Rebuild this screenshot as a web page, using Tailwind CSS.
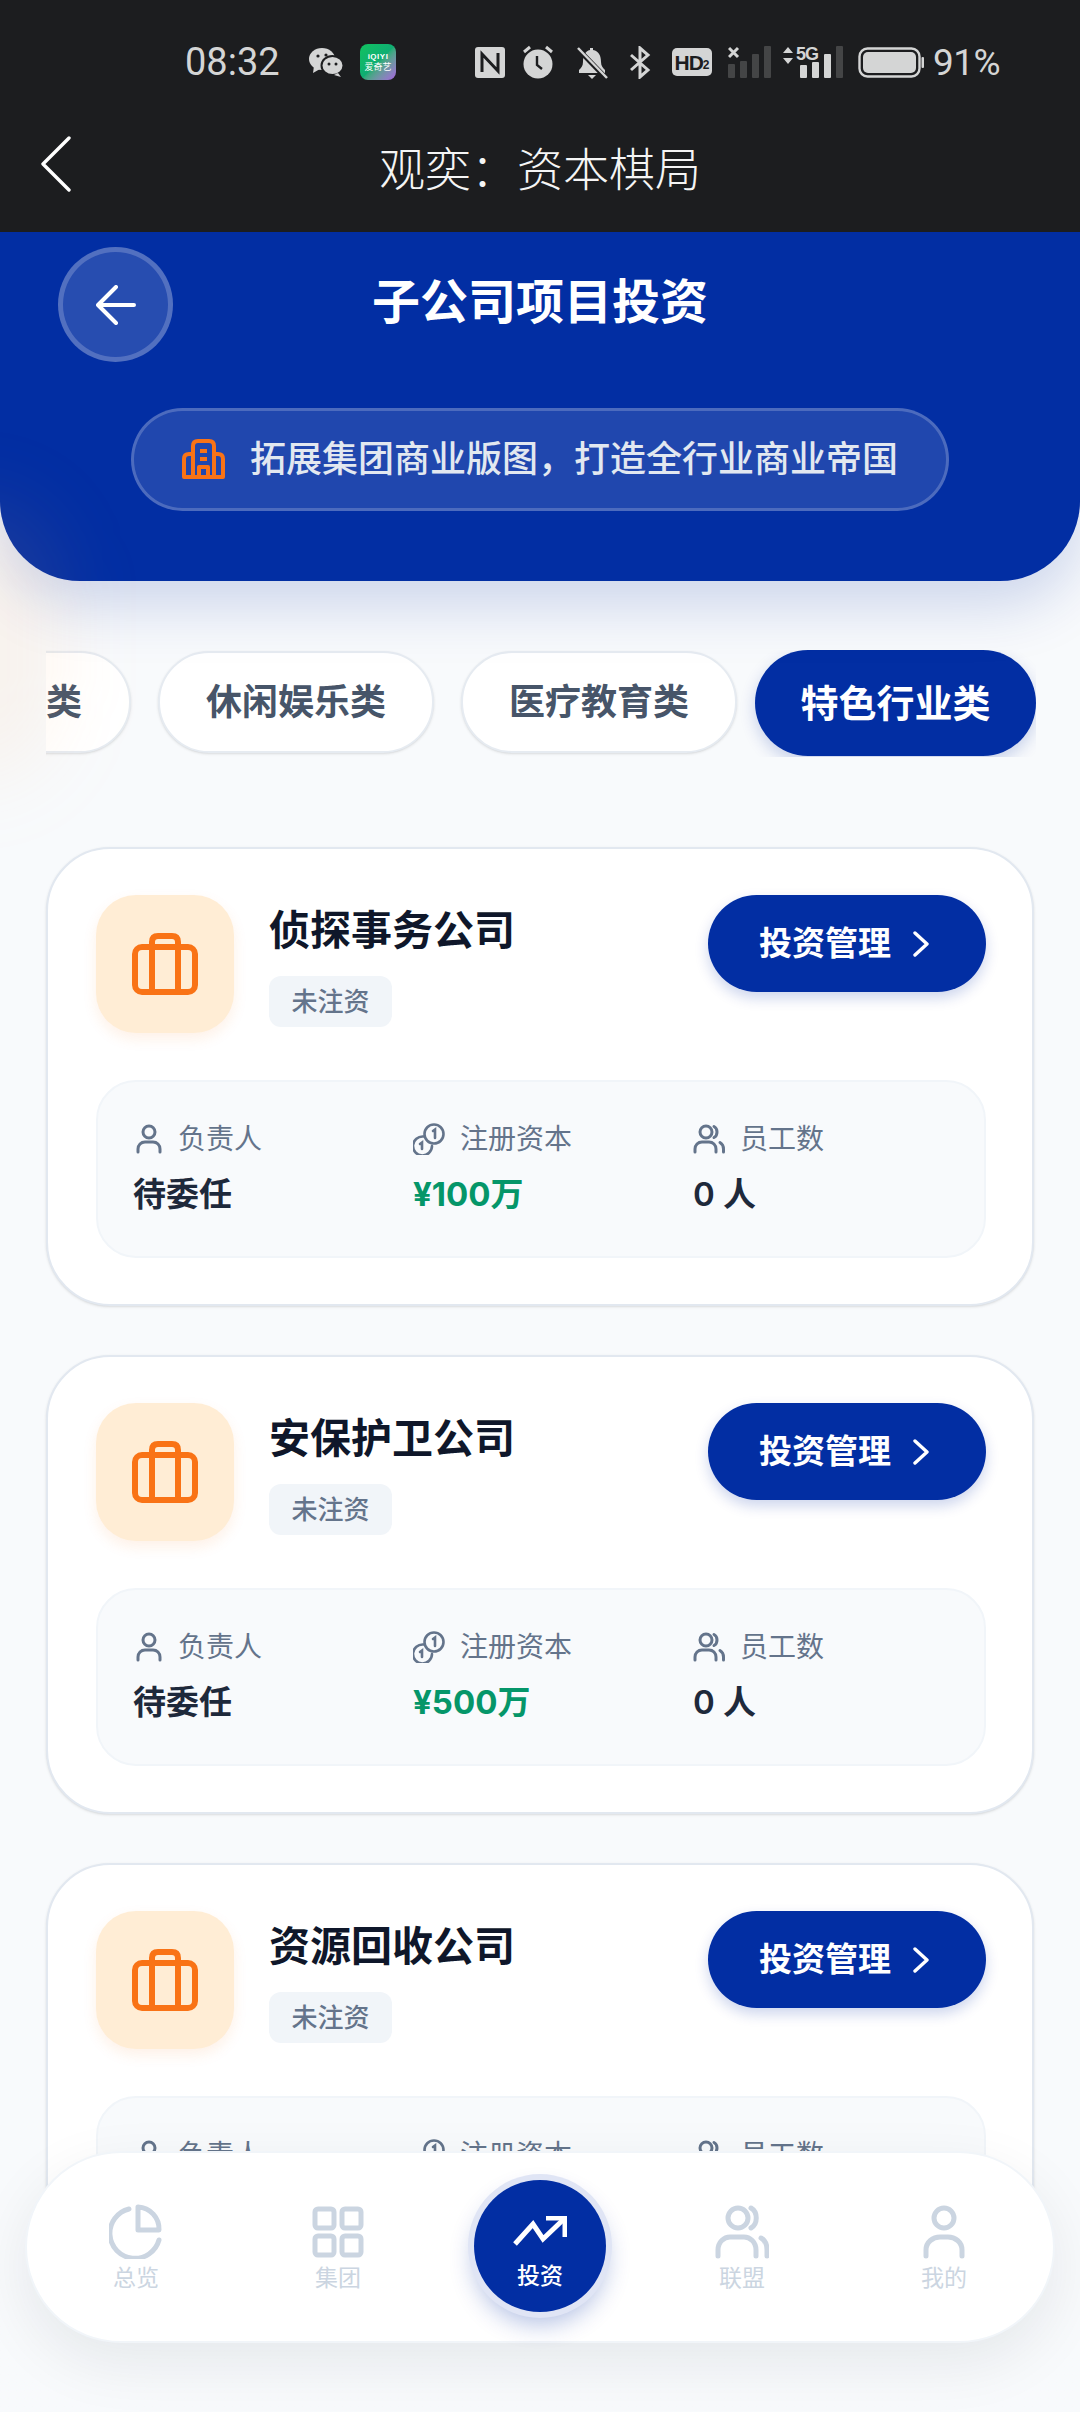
<!DOCTYPE html>
<html lang="zh-CN">
<head>
  <meta charset="UTF-8">
  <meta name="viewport" content="width=device-width, initial-scale=1.0">
  <title>观奕：资本棋局</title>
  <script src="https://cdn.jsdelivr.net/npm/@tailwindcss/browser@4"></script>
</head>
<body class="bg-[#f8fafc] font-['Inter','Noto_Sans_CJK_SC',sans-serif]">
<div class="relative w-[1080px] h-[2412px] overflow-hidden bg-[#f8fafc]">

  <!-- System bars -->
  <div class="h-[232px] bg-[#1c1d1f] relative z-10">
    <div class="h-[124px] pl-[185px] flex items-center text-[#d4d5d5]">
      <span class="font-['Roboto',sans-serif] font-normal text-[38px] w-[95px] leading-none">08:32</span>
      <svg class="ml-[29px] w-[35px] h-[30px]" viewBox="0 0 35 30" fill="#d4d5d5"><ellipse cx="13" cy="12" rx="13" ry="11"/><path d="M5 19l-1 7 7-4z"/><ellipse cx="23.5" cy="18.5" rx="11" ry="9.5" stroke="#1c1d1f" stroke-width="2"/><path d="M29 26l3 4-7-2z"/><circle cx="9" cy="9" r="1.6" fill="#1c1d1f"/><circle cx="17" cy="8" r="1.6" fill="#1c1d1f"/><circle cx="20" cy="17" r="1.5" fill="#1c1d1f"/><circle cx="27" cy="17" r="1.5" fill="#1c1d1f"/></svg>
      <div class="ml-[16px] w-[36px] h-[36px] rounded-[8px] bg-gradient-to-br from-[#12c25f] via-[#0fae72] to-[#a45fe0] flex flex-col items-center justify-center text-white leading-none">
        <span class="text-[8px] font-bold tracking-[0.5px] font-['Liberation_Sans',sans-serif]">iQIYI</span>
        <span class="text-[9px] mt-[1px] font-['Noto_Sans_CJK_SC',sans-serif]">爱奇艺</span>
      </div>
      <svg class="ml-[79px] w-[30px] h-[31px]" viewBox="0 0 30 31"><rect width="30" height="31" rx="3" fill="#d4d5d5"/><path d="M7 25V7l16 17V6" fill="none" stroke="#1c1d1f" stroke-width="3"/></svg>
      <svg class="ml-[17px] w-[32px] h-[34px]" viewBox="0 0 32 34"><circle cx="16" cy="19" r="14.5" fill="#d4d5d5"/><path d="M15 11v9l5 4" fill="none" stroke="#1c1d1f" stroke-width="2.4"/><path d="M2 7l6-5M30 7l-6-5" stroke="#d4d5d5" stroke-width="3"/></svg>
      <svg class="ml-[22px] w-[32px] h-[33px]" viewBox="0 0 32 33"><path d="M14 2h3v2c6 1 8 6 8 12 0 4 2 6 4 8v3H3v-3c2-2 4-4 4-8 0-6 2-11 7-12z" fill="#d4d5d5"/><path d="M12 29h8l-4 4z" fill="#d4d5d5"/><path d="M2 3l28 29" stroke="#1c1d1f" stroke-width="5"/><path d="M2 2l29 30" stroke="#d4d5d5" stroke-width="2.5"/></svg>
      <svg class="ml-[21px] w-[22px] h-[33px]" viewBox="0 0 22 33" fill="none" stroke="#d4d5d5" stroke-width="3"><path d="M2 9l17 15-8 7V2l8 7L2 24"/></svg>
      <div class="ml-[21px] w-[40px] h-[28px] rounded-[5px] bg-[#d4d5d5] flex items-center justify-center text-[#1c1d1f] font-['Liberation_Sans',sans-serif] font-bold leading-none"><span class="text-[21px] tracking-[-1px]">HD</span><span class="text-[12px] mt-[6px]">2</span></div>
      <svg class="ml-[16px] w-[44px] h-[32px]" viewBox="0 0 44 32"><path d="M1 2l9 9M10 2l-9 9" stroke="#d4d5d5" stroke-width="3"/><rect x="0" y="18" width="7" height="14" rx="1" fill="#444546"/><rect x="12" y="15" width="7" height="17" rx="1" fill="#444546"/><rect x="24" y="8" width="7" height="24" rx="1" fill="#444546"/><rect x="36" y="0" width="7" height="32" rx="1" fill="#444546"/></svg>
      <div class="ml-[11px] w-[60px] h-[32px] relative">
        <svg class="w-[60px] h-[32px]" viewBox="0 0 60 32"><path d="M0 7l5-6 5 6zM0 12l5 6 5-6z" fill="#d4d5d5"/><rect x="17" y="19" width="7" height="13" rx="1" fill="#d4d5d5"/><rect x="29" y="16" width="7" height="16" rx="1" fill="#d4d5d5"/><rect x="41" y="8" width="7" height="24" rx="1" fill="#d4d5d5"/><rect x="53" y="0" width="7" height="32" rx="1" fill="#444546"/></svg>
        <span class="absolute left-[13px] top-[-1px] text-[18px] leading-none font-bold text-[#d4d5d5] font-['Liberation_Sans',sans-serif] tracking-[-1px]">5G</span>
      </div>
      <svg class="ml-[15px] w-[66px] h-[31px]" viewBox="0 0 66 31"><rect x="1.5" y="1.5" width="60" height="28" rx="8" fill="none" stroke="#d4d5d5" stroke-width="2.4"/><rect x="5" y="5" width="53" height="21" rx="5" fill="#d4d5d5"/><rect x="63.5" y="10" width="2.5" height="11" rx="1" fill="#d4d5d5"/></svg>
      <span class="ml-[9px] font-['Roboto',sans-serif] font-normal text-[37px] tracking-[-0.5px] leading-none">91%</span>
    </div>
    <div class="relative h-[108px] flex items-center justify-center">
      <svg class="absolute left-[40px] top-[12px] w-[32px] h-[56px]" viewBox="0 0 32 56" fill="none" stroke="#fff" stroke-width="3.4" stroke-linecap="round" stroke-linejoin="round"><path d="M29 2L3 28l26 26"/></svg>
      <h1 class="text-[46px] font-light text-[#f5f5f5] leading-none -mt-[24px] font-['Noto_Sans_CJK_SC',sans-serif]">观奕：资本棋局</h1>
    </div>
  </div>

  <!-- Header -->
  <header class="h-[349px] bg-[#022ea3] rounded-b-[80px] shadow-[0_24px_60px_rgba(2,46,163,0.18)] relative">
    <div class="relative h-[176px]">
      <button class="absolute left-[58px] top-[15px] w-[115px] h-[115px] rounded-full bg-white/15 border-[5px] border-white/20 flex items-center justify-center">
        <svg class="w-[40px] h-[40px]" viewBox="0 0 40 40" fill="none" stroke="#fff" stroke-width="4" stroke-linecap="round" stroke-linejoin="round"><path d="M38 20H3M20 2L2 20l18 18"/></svg>
      </button>
      <h2 class="pt-[44px] text-center text-[48px] leading-[52px] font-bold text-white">子公司项目投资</h2>
    </div>
    <div class="mx-[131px] h-[103px] rounded-full bg-white/12 border-[3px] border-white/20 flex items-center pl-[48px] pb-[2px]">
      <svg class="w-[43px] h-[40px]" viewBox="0 0 43 40" fill="none" stroke="#f97316" stroke-width="4" stroke-linejoin="round"><path d="M11 38V7q0-5 5-5h11q5 0 5 5v31zM11 15H7q-5 0-5 5v18h39V20q0-5-5-5h-4"/><path d="M18 12h7M18 20h7M17 38V28h9v10"/></svg>
      <span class="ml-[25px] text-[36px] font-medium text-[#e2e8f0] leading-none whitespace-nowrap">拓展集团商业版图，打造全行业商业帝国</span>
    </div>
  </header>

  <!-- Category tabs -->
  <div class="mt-[69px] mx-[46px] w-[990px] h-[107px] overflow-hidden flex justify-end items-start gap-[27px] pt-[1px]">
    <div class="shrink-0 w-[276px] h-[102px] rounded-full bg-white border-[2px] border-[#e6ebf1] shadow-sm flex items-center justify-end pr-[47px] text-[36px] font-bold text-[#475569]">类</div>
    <div class="shrink-0 w-[276px] h-[102px] rounded-full bg-white border-[2px] border-[#e6ebf1] shadow-sm flex items-center justify-center text-[36px] font-bold text-[#475569]">休闲娱乐类</div>
    <div class="shrink-0 w-[276px] h-[102px] rounded-full bg-white border-[2px] border-[#e6ebf1] shadow-sm flex items-center justify-center text-[36px] font-bold text-[#475569]">医疗教育类</div>
    <div class="shrink-0 w-[281px] h-[106px] -ml-[9px] -mt-[1px] rounded-full bg-[#022ea3] shadow-[0_6px_16px_rgba(2,46,163,0.2)] flex items-center justify-center text-[38px] font-bold text-white">特色行业类</div>
  </div>

  <!-- Company cards -->
  <main id="cards" class="mt-[90px] mx-[46px] flex flex-col gap-[49px]"></main>

  <!-- Soft peach glow on the left edge -->
  <div class="absolute left-[-110px] top-[500px] w-[170px] h-[280px] rounded-full bg-orange-300/10 blur-[40px] z-20 pointer-events-none"></div>

  <!-- Bottom tab bar -->
  <div class="absolute left-0 right-0 bottom-0 h-[172px] bg-gradient-to-b from-[#f8fafc]/0 to-[#f8fafc] to-[30%] z-20"></div>
  <nav class="absolute left-[25px] top-[2151px] w-[1030px] h-[192px] rounded-full bg-white border-[2px] border-[#f1f5f9] shadow-[0_20px_60px_rgba(15,23,42,0.08)] z-30 grid grid-cols-5 px-[8px]">
    <div class="flex flex-col items-center pt-[51px] text-[23px] leading-[28px] text-[#cbd5e1]">
      <svg class="w-[54px] h-[55px]" viewBox="0 0 54 55" fill="none" stroke="#cbd5e1" stroke-width="5" stroke-linecap="round" stroke-linejoin="round"><path d="M20 5A25 25 0 1 0 50 36"/><path d="M29 3a22 22 0 0 1 21 23H29z"/></svg>
      <span class="mt-[5px]">总览</span>
    </div>
    <div class="flex flex-col items-center pt-[51px] text-[23px] leading-[28px] text-[#cbd5e1]">
      <svg class="w-[54px] h-[55px]" viewBox="0 0 54 55" fill="none" stroke="#cbd5e1" stroke-width="5"><rect x="4" y="5" width="19" height="19" rx="3"/><rect x="31" y="5" width="19" height="19" rx="3"/><rect x="4" y="32" width="19" height="19" rx="3"/><rect x="31" y="32" width="19" height="19" rx="3"/></svg>
      <span class="mt-[5px]">集团</span>
    </div>
    <div class="flex justify-center pt-[27px]">
      <div class="w-[132px] h-[132px] rounded-full bg-[#022ea3] ring-[6px] ring-[#e0e5f5] shadow-[0_12px_24px_rgba(2,46,163,0.3)] flex flex-col items-center text-white text-[23px] leading-[28px] font-medium pt-[36px]">
        <svg class="w-[54px] h-[30px]" viewBox="0 0 54 30" fill="none" stroke="#fff" stroke-width="5"><path d="M2 28L20 8l10 15L52 2"/><path d="M33 2h19v19"/></svg>
        <span class="mt-[16px]">投资</span>
      </div>
    </div>
    <div class="flex flex-col items-center pt-[51px] text-[23px] leading-[28px] text-[#cbd5e1]">
      <svg class="w-[54px] h-[55px]" viewBox="0 0 54 55" fill="none" stroke="#cbd5e1" stroke-width="5" stroke-linecap="round"><circle cx="23" cy="14" r="10"/><path d="M36 4c7 4 7 16 0 20"/><path d="M3 52V46c0-8 6-13 12-13h14c6 0 12 5 12 13v6"/><path d="M46 34c4 2 6 7 6 12v6"/></svg>
      <span class="mt-[5px]">联盟</span>
    </div>
    <div class="flex flex-col items-center pt-[51px] text-[23px] leading-[28px] text-[#cbd5e1]">
      <svg class="w-[54px] h-[55px]" viewBox="0 0 54 55" fill="none" stroke="#cbd5e1" stroke-width="5" stroke-linecap="round"><circle cx="27" cy="14" r="10"/><path d="M9 52V46c0-8 7-13 14-13h8c7 0 14 5 14 13v6"/></svg>
      <span class="mt-[5px]">我的</span>
    </div>
  </nav>
</div>

<script>
  var companies = [
    { name: "侦探事务公司", capital: "¥100万" },
    { name: "安保护卫公司", capital: "¥500万" },
    { name: "资源回收公司", capital: "" }
  ];
  var res = "";
  for (var i = 0; i < companies.length; i++) {
    var c = companies[i];
    res += `<section class="shrink-0 h-[459px] bg-white rounded-[64px] border-[2px] border-[#e2e8f0] shadow-sm pl-[48px] pr-[46px] pt-[46px]">
      <div class="flex items-start h-[138px]">
        <div class="w-[138px] h-[138px] rounded-[40px] bg-[#ffedd5] shadow-[0_6px_14px_rgba(249,115,22,0.1)] flex items-center justify-center">
          <svg class="w-[66px] h-[62px]" viewBox="0 0 66 62" fill="none" stroke="#f97316" stroke-width="6" stroke-linejoin="round"><rect x="3" y="14" width="60" height="45" rx="7"/><path d="M20 14V9q0-6 6-6h14q6 0 6 6v5M20 14v45M46 14v45"/></svg>
        </div>
        <div class="ml-[35px] flex-1">
          <h3 class="text-[41px] leading-[60px] font-bold text-[#0f172a] pt-[5px]">` + c.name + `</h3>
          <span class="inline-flex mt-[16px] h-[51px] w-[123px] items-center justify-center rounded-[12px] bg-[#f1f5f9] text-[26px] font-medium text-[#64748b]">未注资</span>
        </div>
        <button class="w-[278px] h-[97px] rounded-full bg-[#022ea3] shadow-[0_6px_14px_rgba(2,46,163,0.2)] flex items-center justify-center pr-[6px] text-[33px] font-bold text-white">
          投资管理
          <svg class="ml-[22px] w-[16px] h-[26px]" viewBox="0 0 16 26" fill="none" stroke="#fff" stroke-width="3.4" stroke-linecap="round" stroke-linejoin="round"><path d="M2 2l12 11L2 24"/></svg>
        </button>
      </div>
      <div class="mt-[47px] h-[178px] rounded-[40px] bg-[#f8fafc] border-[2px] border-[#f1f5f9] px-[35px] pt-[37px] grid grid-cols-3 gap-x-[24px]">
        <div>
          <div class="flex items-center h-[40px] text-[28px] text-[#64748b]">
            <svg class="ml-[3px] w-[26px] h-[30px]" viewBox="0 0 26 30" fill="none" stroke="#64748b" stroke-width="3" stroke-linecap="round"><circle cx="13" cy="8" r="6"/><path d="M2 28v-3c0-4 3-7 7-7h8c4 0 7 3 7 7v3"/></svg>
            <span class="ml-[16px]">负责人</span>
          </div>
          <div class="mt-[12px] text-[33px] leading-[46px] font-bold text-[#1e293b]">待委任</div>
        </div>
        <div>
          <div class="flex items-center h-[40px] text-[28px] text-[#64748b]">
            <svg class="w-[32px] h-[32px]" viewBox="0 0 32 32" fill="none" stroke="#64748b" stroke-width="2.6" stroke-linecap="round"><circle cx="21" cy="11" r="9.5"/><path d="M20 8l2-1.500V15"/><path d="M10.500 13.500A9.500 9.500 0 1 0 19 23"/><path d="M7 21l2-1.500V26"/></svg>
            <span class="ml-[15px]">注册资本</span>
          </div>
          <div class="mt-[12px] text-[33px] leading-[46px] font-bold text-[#059669]">` + c.capital + `</div>
        </div>
        <div>
          <div class="flex items-center h-[40px] text-[28px] text-[#64748b]">
            <svg class="w-[32px] h-[30px]" viewBox="0 0 32 30" fill="none" stroke="#64748b" stroke-width="3" stroke-linecap="round"><circle cx="13" cy="8" r="6"/><path d="M2 28v-3c0-4 3-7 7-7h7c4 0 7 3 7 7v3"/><path d="M21 2.500c4 2 4 9 0 11M27 18.500c2.500 1.500 3.500 4 3.500 6.500v3"/></svg>
            <span class="ml-[15px]">员工数</span>
          </div>
          <div class="mt-[12px] text-[33px] leading-[46px] font-semibold text-[#1e293b]">0 人</div>
        </div>
      </div>
    </section>`;
  }
  document.getElementById("cards").innerHTML = res;
</script>
</body>
</html>
